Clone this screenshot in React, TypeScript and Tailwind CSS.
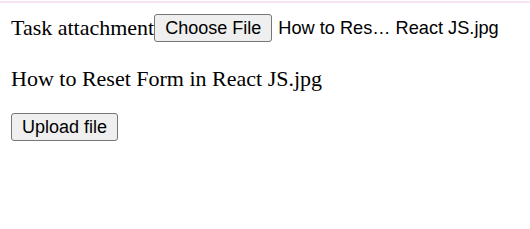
export default function App() {
  const serif = { fontFamily: '"Liberation Serif", "Times New Roman", serif' };
  return (
    <div className="h-[229px] w-[530px] bg-white text-black">
      <div className="pt-px">
        <div className="h-[2px] bg-[#f4e4f6]" />
      </div>
      <div className="px-[11px] pt-[11px]">
        <div className="flex h-[28px] items-center">
          <span className="text-[22px] leading-none" style={serif}>
            Task attachment
          </span>
          <button
            type="button"
            className="flex h-[28px] items-center rounded-[3px] border border-[#767676] bg-[#efefef] px-[10px] font-['Liberation_Sans',Arial,sans-serif] text-[18px] leading-none text-black"
          >
            Choose File
          </button>
          <span className="ml-[6px] font-['Liberation_Sans',Arial,sans-serif] text-[18.2px] leading-none">
            How to Res… React JS.jpg
          </span>
        </div>
        <p className="mt-[24px] text-[22px] leading-[26px]" style={serif}>
          How to Reset Form in React JS.jpg
        </p>
        <button
          type="button"
          className="mt-[21px] flex h-[28px] items-center rounded-[3px] border border-[#767676] bg-[#efefef] px-[10px] font-['Liberation_Sans',Arial,sans-serif] text-[18px] leading-none text-black"
        >
          Upload file
        </button>
      </div>
    </div>
  );
}
